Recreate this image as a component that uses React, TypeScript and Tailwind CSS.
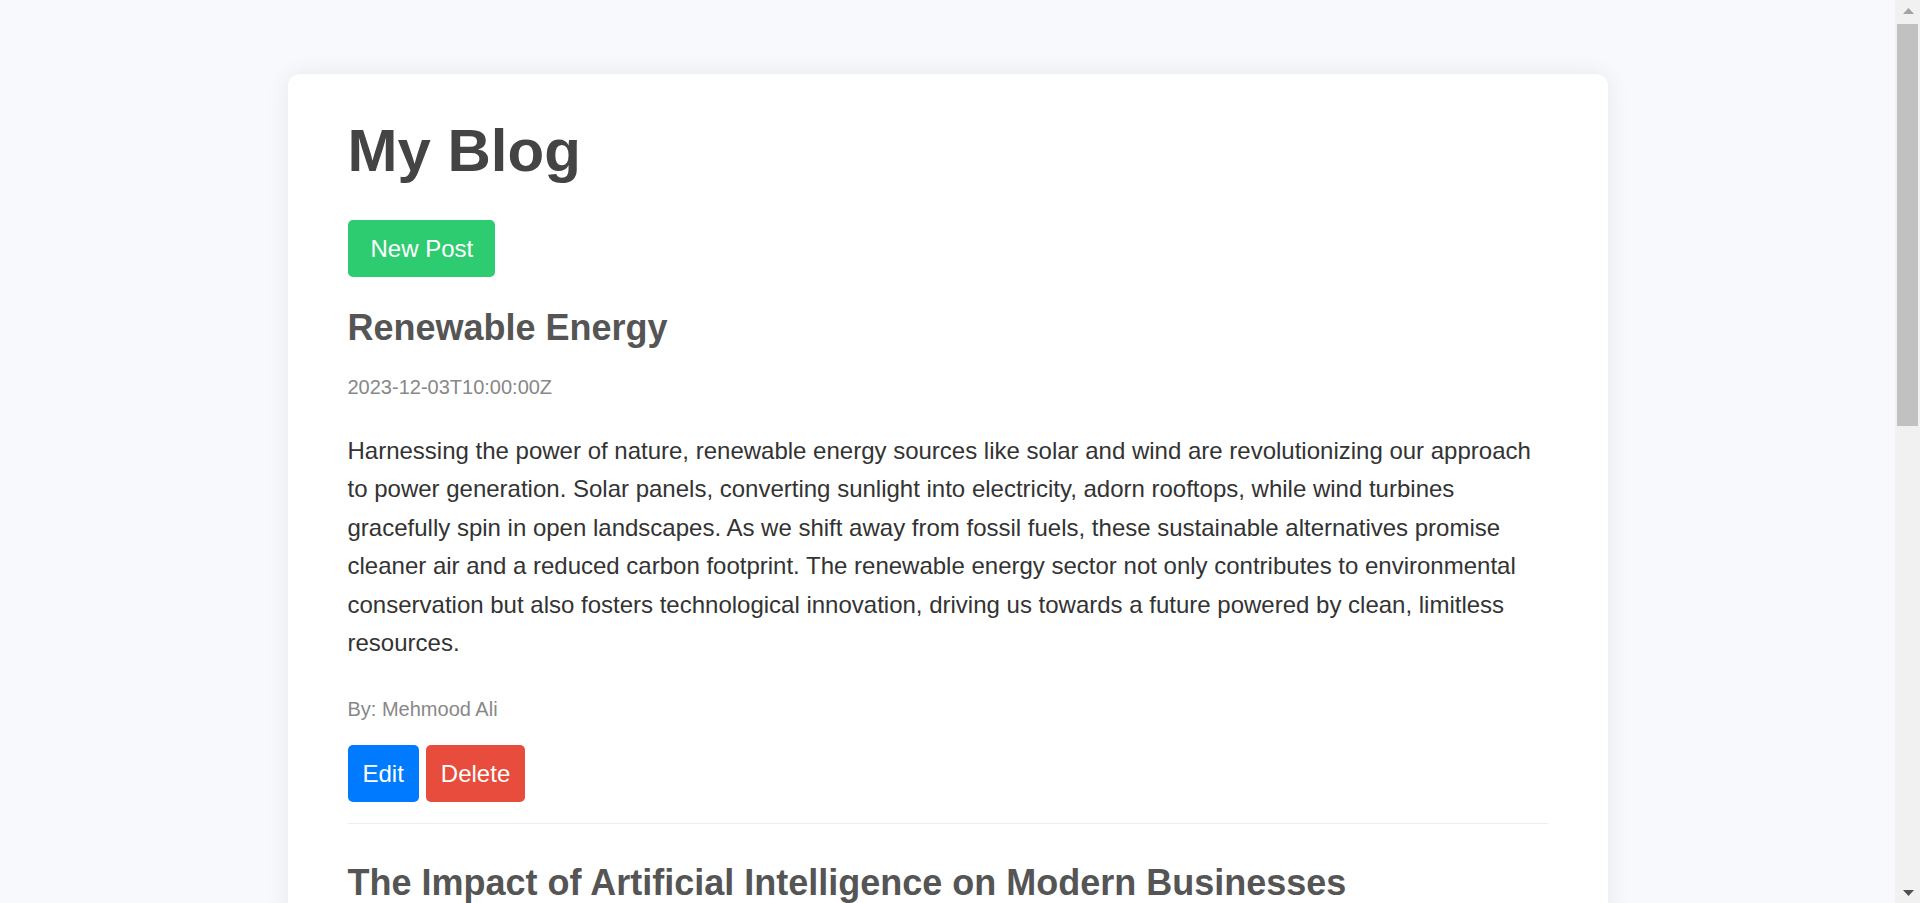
import React from "react";

type Post = {
  title: string;
  date: string;
  body: string;
  author: string;
};

const posts: Post[] = [
  {
    title: "Renewable Energy",
    date: "2023-12-03T10:00:00Z",
    body:
      "Harnessing the power of nature, renewable energy sources like solar and wind are revolutionizing our approach to power generation. Solar panels, converting sunlight into electricity, adorn rooftops, while wind turbines gracefully spin in open landscapes. As we shift away from fossil fuels, these sustainable alternatives promise cleaner air and a reduced carbon footprint. The renewable energy sector not only contributes to environmental conservation but also fosters technological innovation, driving us towards a future powered by clean, limitless resources.",
    author: "Mehmood Ali",
  },
  {
    title: "The Impact of Artificial Intelligence on Modern Businesses",
    date: "2023-11-28T14:30:00Z",
    body:
      "Artificial Intelligence is transforming the way businesses operate, from automating routine tasks to delivering deep insights through data analysis. Companies are leveraging machine learning models to predict customer behavior, optimize supply chains, and personalize marketing campaigns. While AI brings remarkable efficiency and new opportunities, it also raises important questions about ethics, privacy, and the future of work, challenging leaders to adopt it responsibly.",
    author: "Mehmood Ali",
  },
  {
    title: "Healthy Living Tips",
    date: "2023-11-20T09:15:00Z",
    body:
      "A balanced lifestyle begins with small daily habits. Eating whole foods, staying hydrated, getting enough sleep, and moving your body regularly all contribute to better physical and mental well-being. Remember to take breaks, practice mindfulness, and spend time with the people who matter most.",
    author: "Mehmood Ali",
  },
];

function PostItem({ post, first }: { post: Post; first: boolean }) {
  return (
    <div className="flex flex-col">
      <h2
        className={`${first ? "mt-[29px]" : "mt-[37px]"} text-[36px] leading-[43px] font-bold text-[#555]`}
      >
        {post.title}
      </h2>
      <div className="mt-[26px] text-[20px] leading-[24px] text-[#888]">{post.date}</div>
      <p className="mt-[33px] text-[24px] leading-[1.6] text-[#333]">{post.body}</p>
      <div className="mt-[35px] text-[20px] leading-[24px] text-[#888]">By: {post.author}</div>
      <div className="mt-[24px] flex gap-[7px]">
        <button className="rounded-[5px] bg-[#007bff] px-[15px] py-[15px] text-[24px] leading-[27px] text-white">
          Edit
        </button>
        <button className="rounded-[5px] bg-[#e74c3c] px-[15px] py-[15px] text-[24px] leading-[27px] text-white">
          Delete
        </button>
      </div>
      <div className="mt-[21px] h-px bg-[#eeeeee]" />
    </div>
  );
}

function FakeScrollbar() {
  return (
    <div className="sticky top-0 flex h-screen w-[25px] shrink-0 flex-col bg-[#f1f1f1]">
      <div className="flex h-[17px] items-center justify-center pl-[2px] pt-[4px]">
        <svg width="11" height="6" viewBox="0 0 11 6">
          <polygon points="5.5,0 11,6 0,6" fill="#a3a3a3" />
        </svg>
      </div>
      <div className="ml-[2px] mr-[2px] mt-[7px] h-[402px] bg-[#c1c1c1]" />
      <div className="flex-1" />
      <div className="flex h-[17px] items-center justify-center pl-[2px] pb-[4px]">
        <svg width="11" height="6" viewBox="0 0 11 6">
          <polygon points="0,0 11,0 5.5,6" fill="#505050" />
        </svg>
      </div>
    </div>
  );
}

export default function App() {
  return (
    <div
      className="flex min-h-screen items-start bg-[#f8f9fc]"
      style={{ fontFamily: '"Liberation Sans", Arial, sans-serif' }}
    >
      <main className="flex-1 py-[74px]">
        <div className="mx-auto w-[1320px] rounded-xl bg-white px-[60px] pt-[41px] pb-[40px] shadow-[0_0_25px_rgba(0,0,0,0.07)]">
          <h1 className="text-[60px] leading-[72px] font-bold text-[#444]">My Blog</h1>
          <div className="mt-[33px] flex">
            <button className="rounded-[5px] bg-[#2ecc71] pl-[23px] pr-[22px] py-[15px] text-[24px] leading-[27px] text-white">
              New Post
            </button>
          </div>
          {posts.map((p, i) => (
            <PostItem key={i} post={p} first={i === 0} />
          ))}
        </div>
      </main>
      <FakeScrollbar />
    </div>
  );
}
